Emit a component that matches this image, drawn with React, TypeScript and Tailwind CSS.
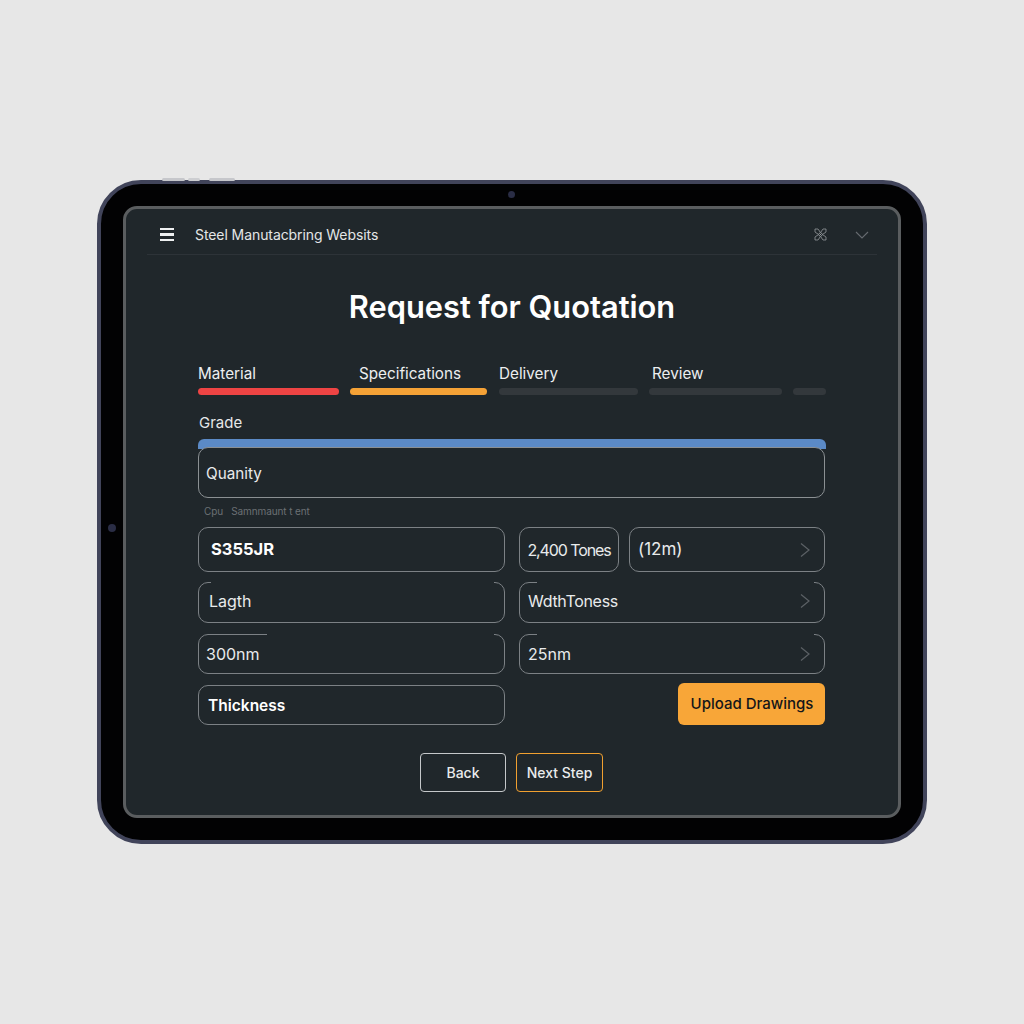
import React from "react";

const font = { fontFamily: "Inter, 'Liberation Sans', sans-serif" };

function Chevron() {
  return (
    <svg width="10" height="16" viewBox="0 0 10 16" fill="none" className="shrink-0">
      <path d="M1 1.5 L9 8 L1 14.5" stroke="#5c6166" strokeWidth="1.2" />
    </svg>
  );
}

function Field({
  children,
  className = "",
  chevron = false,
  cover = "",
}: {
  children: React.ReactNode;
  className?: string;
  chevron?: boolean;
  cover?: string;
}) {
  return (
    <div
      className={`relative flex items-center justify-between rounded-[10px] border border-[#7c8185] bg-[#20272b] text-[#e9ebec] ${className}`}
    >
      {cover ? <span className={`absolute -top-px h-[2px] bg-[#20272b] ${cover}`} /> : null}
      {children}
      {chevron ? <Chevron /> : null}
    </div>
  );
}

export default function App() {
  return (
    <div className="flex h-screen w-full items-center justify-center bg-[#e7e7e7]" style={font}>
      <div className="relative h-[664px] w-[830px] rounded-[44px] border-[4px] border-[#41445a] bg-[#020203] p-[22px]">
        <div className="absolute -top-[6px] left-[61px] h-[3px] w-[23px] rounded-full bg-[#c6c7cb]" />
        <div className="absolute -top-[6px] left-[87px] h-[3px] w-[12px] rounded-full bg-[#cdced1]" />
        <div className="absolute -top-[6px] left-[108px] h-[3px] w-[26px] rounded-full bg-[#c6c7cb]" />
        <div className="absolute left-[407px] top-[7px] h-[7px] w-[7px] rounded-full bg-[#2a2d45]" />
        <div className="absolute left-[7px] top-[340px] h-[8px] w-[8px] rounded-full bg-[#2a2d45]" />

        <div className="flex h-full flex-col rounded-[14px] border-[3px] border-[#5a5d5f] bg-[#20272b]">
          <header className="mx-[21px] flex h-[46px] shrink-0 items-center border-b border-[#2d3338] pl-[13px] pr-[8px] pt-[6px]">
            <div className="flex w-[14px] flex-col gap-[3px]">
              <span className="h-[2.5px] bg-[#eef0f1]" />
              <span className="h-[2.5px] bg-[#eef0f1]" />
              <span className="h-[2.5px] bg-[#eef0f1]" />
            </div>
            <span className="ml-[21px] text-[14px] tracking-[-0.08px] text-[#e4e6e7]">
              Steel Manutacbring Websits
            </span>
            <svg width="13" height="13" viewBox="0 0 13 13" fill="none" className="ml-auto" stroke="#a4a8ab" strokeWidth="0.7">
              <path d="M1 1 H4 C5 2.5 6 3.5 6.5 5 C7 3.5 8 2.5 9 1 H12 V4 C10.5 5 9.5 6 8 6.5 C9.5 7 10.5 8 12 9 V12 H9 C8 10.5 7 9.5 6.5 8 C6 9.5 5 10.5 4 12 H1 V9 C2.5 8 3.5 7 5 6.5 C3.5 6 2.5 5 1 4 Z" />
              <path d="M5 5 L8 8 M8 5 L5 8" />
            </svg>
            <svg width="14" height="8" viewBox="0 0 14 8" fill="none" className="ml-[28px]">
              <path d="M1 1 L7 7 L13 1" stroke="#666b70" strokeWidth="1.1" />
            </svg>
          </header>

          <div className="flex flex-1 flex-col px-[72px]">
            <h1 className="mt-[32px] text-center text-[30.8px] font-semibold leading-[40px] text-white">
              Request for Quotation
            </h1>

            <div className="mt-[35px] flex gap-[11px] text-[15.25px] leading-[24px] text-[#eceeef]">
              <div className="w-[141px]">
                <div>Material</div>
                <div className="mt-[2px] h-[7px] rounded-full bg-[#ee4444]" />
              </div>
              <div className="w-[137px]">
                <div className="pl-[9px]">Specifications</div>
                <div className="mt-[2px] h-[7px] rounded-full bg-[#f5a236]" />
              </div>
              <div className="ml-[1px] w-[139px]">
                <div>Delivery</div>
                <div className="mt-[2px] h-[7px] rounded-full bg-[#33383c]" />
              </div>
              <div className="w-[133px]">
                <div className="pl-[3px]">Review</div>
                <div className="mt-[2px] h-[7px] rounded-full bg-[#33383c]" />
              </div>
              <div className="flex-1">
                <div className="h-[24px]" />
                <div className="mt-[2px] h-[7px] rounded-full bg-[#33383c]" />
              </div>
            </div>

            <div className="mt-[16px] pl-[1px] text-[15px] leading-[24px] text-[#e6e8e9]">Grade</div>

            <div className="mt-[4px] h-[10px] rounded-t-[6px] bg-[#5b8ac6]" />
            <Field className="-mt-[2px] h-[51px] w-[627px] border-[#8b9093] pl-[7px] pt-[3px] text-[15.25px]">
              <span>Quanity</span>
            </Field>

            <div className="mt-[5px] whitespace-pre pl-[6px] text-[10px] leading-[16px] tracking-[-0.1px] text-[#6b7074]">
              Cpu   Samnmaunt t ent
            </div>

            <div className="mt-[8px] flex flex-col pr-[1px]">
              <div className="flex gap-[14px]">
                <Field className="h-[45px] w-[307px] px-[12px] text-[16.5px] font-bold text-white">
                  <span>S355JR</span>
                </Field>
                <div className="flex flex-1 gap-[10px]">
                  <Field className="h-[45px] w-[100px] justify-center text-[16px]">
                    <span className="tracking-[-1.1px]">2,400 Tones</span>
                  </Field>
                  <Field className="h-[45px] flex-1 pl-[8px] pr-[14px] text-[17px]" chevron>
                    <span>(12m)</span>
                  </Field>
                </div>
              </div>

              <div className="mt-[10px] flex gap-[14px]">
                <Field className="h-[41px] w-[307px] pb-[4px] pl-[10px] text-[16px] text-[#dcdfe0]" cover="left-[12px] right-[10px]">
                  <span>Lagth</span>
                </Field>
                <Field className="h-[41px] flex-1 pb-[3px] pl-[8px] pr-[14px] text-[16px]" chevron cover="left-[17px] right-[10px]">
                  <span className="tracking-[-0.3px]">WdthToness</span>
                </Field>
              </div>

              <div className="mt-[11px] flex gap-[14px]">
                <Field className="h-[40px] w-[307px] pb-[1px] pl-[7px] text-[16px]" cover="left-[68px] right-[10px]">
                  <span>300nm</span>
                </Field>
                <Field className="h-[40px] flex-1 pb-[1px] pl-[8px] pr-[14px] text-[16px]" chevron cover="left-[17px] right-[10px]">
                  <span>25nm</span>
                </Field>
              </div>

              <div className="flex items-end justify-between">
                <Field className="mt-[11px] h-[40px] w-[307px] pl-[9px] pt-[1px] text-[15.5px] font-semibold text-white">
                  <span>Thickness</span>
                </Field>
                <button className="h-[42px] w-[147px] rounded-[6px] bg-[#f8a638] pl-[1px] pt-[1px] text-[15px] font-medium text-[#14161a]">
                  Upload Drawings
                </button>
              </div>
            </div>

            <div className="mt-[28px] flex justify-center gap-[10px] pr-[1px] text-[14px] font-medium">
              <button className="h-[39px] w-[86px] rounded-[4px] border border-[#c5c8ca] text-[#e9ebec]">Back</button>
              <button className="h-[39px] w-[87px] rounded-[4px] border border-[#f0a030] text-[#e9ebec]">Next Step</button>
            </div>
          </div>
        </div>
      </div>
    </div>
  );
}
